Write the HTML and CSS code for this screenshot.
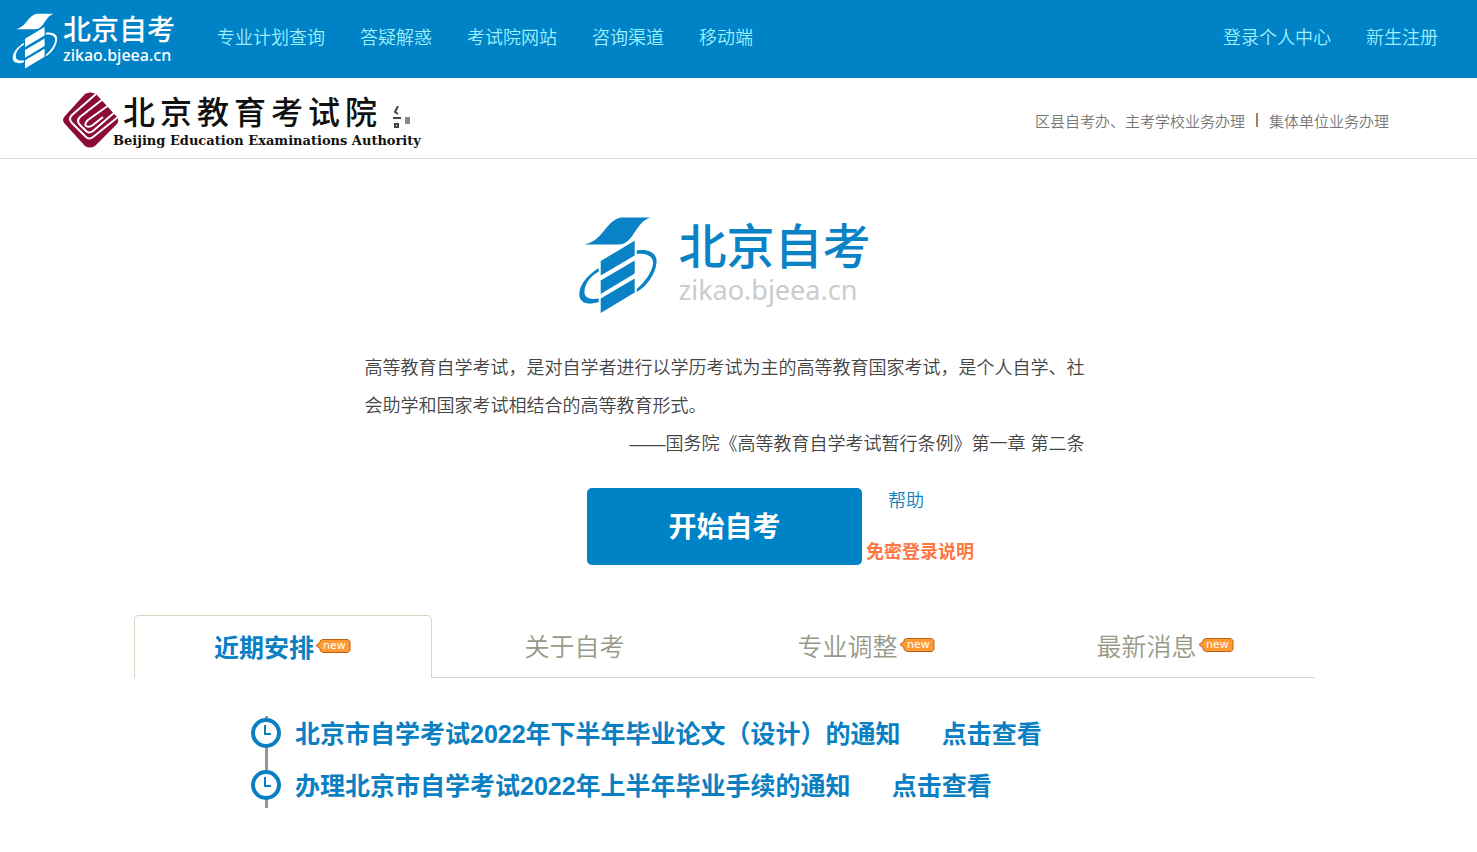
FILE: index.html
```html
<!DOCTYPE html>
<html lang="zh-CN">
  <head>
    <meta charset="UTF-8" />
    <meta name="viewport" content="width=device-width, initial-scale=1.0" />
    <title>北京自考</title>
    <link rel="stylesheet" href="styles.css" />
  </head>
  <body>
    <svg class="sprite" aria-hidden="true">
      <symbol id="logo-mark" viewBox="0 0 80 100">
        <path d="M6.5 29.5C26 25 27 6 43 2.500H72.500C57 7 56 29 41 29.500Z" />
        <path d="M22.700 46L56.700 25.700V40.500L22.700 60.500ZM22.700 65.500L56.700 45.500V58.500L22.700 79ZM22.700 83.500L56.700 63.500V77.500L22.700 98Z" />
        <path d="M58.700 35.500C72 33.500 79.500 39 78.500 48C77 60 69 71 58.700 77V74C67 67 74 57 75 49C76 42 69 37.500 58.700 39ZM20.700 53C8 61 1 71 1.300 80C2 89 11 90 20.700 87V83.500C12 85 6.500 83 6.500 77C6.500 70 11 62 20.700 56.500Z" />
      </symbol>
      <symbol id="icon-new" viewBox="0 0 36 16">
        <path d="M1 7.500L5 4.500V3L7.500 1.500H33L35 3.500V12.500L33 14.500H7.500L5 12.500V10.500Z" fill="#f93" stroke="#b8620f" />
        <text x="8" y="11" class="new-text">new</text>
      </symbol>
      <symbol id="icon-clock" viewBox="0 0 32 32">
        <circle cx="16" cy="16" r="13" fill="#fff" stroke="#0a7fc2" stroke-width="4" />
        <path d="M15 8V17H21" fill="none" stroke="#0a7fc2" stroke-width="2" />
      </symbol>
    </svg>

    <header class="topbar">
      <a href="#" class="brand">
        <svg class="brand-mark"><use href="#logo-mark" /></svg>
        <span class="brand-text">
          <span class="brand-name">北京自考</span>
          <span class="brand-url">zikao.bjeea.cn</span>
        </span>
      </a>
      <nav class="menu">
        <a href="#">专业计划查询</a>
        <a href="#">答疑解惑</a>
        <a href="#">考试院网站</a>
        <a href="#">咨询渠道</a>
        <a href="#">移动端</a>
      </nav>
      <nav class="menu account">
        <a href="#">登录个人中心</a>
        <a href="#">新生注册</a>
      </nav>
    </header>

    <div class="subbar">
      <a href="#" class="authority">
        <svg class="authority-mark" viewBox="0 0 58 56">
          <path d="M23 2Q28-1 34 2L55 25Q58 29 54 33L33 54Q28 57 23 54L3 32Q-1 28 3 24Z" fill="#8d0b38" />
          <g fill="none" stroke="#fff" stroke-width="2">
            <path d="M34 2L10 23Q6 27 10 31L24 45Q27 48 31 45L56 25" />
            <path d="M41 7L18 25Q14 29 18 33L24 39Q27 42 31 39L53 20" />
            <path d="M47 13L26 28Q22 32 24 34Q27 36 31 33L41 25" />
          </g>
        </svg>
        <span class="authority-text">
          <span class="authority-cn">
            <span>北</span><span>京</span><span>教</span><span>育</span><span>考</span><span>试</span><span>院</span>
            <svg class="seal" viewBox="0 0 18 24">
              <path d="M6 0L3 6L6 8M1 12H9M3 18H6V21H3Z" fill="none" stroke="#444" stroke-width="2" />
              <rect x="13" y="11" width="5" height="7" fill="#888" />
            </svg>
          </span>
          <span class="authority-en">Beijing Education Examinations Authority</span>
        </span>
      </a>
      <nav class="office">
        <a href="#">区县自考办、主考学校业务办理</a>
        <span class="divider">|</span>
        <a href="#">集体单位业务办理</a>
      </nav>
    </div>

    <main>
      <h1 class="hero-logo">
        <svg class="hero-mark"><use href="#logo-mark" /></svg>
        <span class="hero-text">
          <span class="hero-name">北京自考</span>
          <span class="hero-url">zikao.bjeea.cn</span>
        </span>
      </h1>

      <blockquote class="quote">
        <p>高等教育自学考试，是对自学者进行以学历考试为主的高等教育国家考试，是个人自学、社会助学和国家考试相结合的高等教育形式。</p>
        <p class="source">——国务院《高等教育自学考试暂行条例》第一章 第二条</p>
      </blockquote>

      <div class="actions">
        <button type="button" class="start">开始自考</button>
        <div class="action-links">
          <a href="#" class="help">帮助</a>
          <a href="#" class="notice">免密登录说明</a>
        </div>
      </div>

      <div class="tabs" role="tablist">
        <button type="button" role="tab" aria-selected="true" class="tab active">近期安排<svg class="new"><use href="#icon-new" /></svg></button>
        <button type="button" role="tab" aria-selected="false" class="tab">关于自考</button>
        <button type="button" role="tab" aria-selected="false" class="tab">专业调整<svg class="new"><use href="#icon-new" /></svg></button>
        <button type="button" role="tab" aria-selected="false" class="tab">最新消息<svg class="new"><use href="#icon-new" /></svg></button>
      </div>

      <ul class="timeline">
        <li>
          <svg class="clock"><use href="#icon-clock" /></svg>
          <a href="#">北京市自学考试2022年下半年毕业论文（设计）的通知</a>
          <a href="#" class="view">点击查看</a>
        </li>
        <li>
          <svg class="clock"><use href="#icon-clock" /></svg>
          <a href="#">办理北京市自学考试2022年上半年毕业手续的通知</a>
          <a href="#" class="view">点击查看</a>
        </li>
      </ul>
    </main>
  </body>
</html>
```

FILE: styles.css
```css
* {
  box-sizing: border-box;
}

body {
  margin: 0;
  background: #fff;
  color: #444;
  font-family: "Liberation Sans", "Noto Sans CJK SC", sans-serif;
  font-size: 18px;
}

a {
  color: inherit;
  text-decoration: none;
}

a:hover {
  text-decoration: underline;
}

.sprite {
  display: none;
}

/* Top bar */
.topbar {
  display: flex;
  align-items: center;
  height: 78px;
  padding: 0 39px 0 12px;
  background: #0082c6;
  color: #9ef0ff;
}

.brand {
  display: flex;
  align-items: center;
  gap: 5px;
  width: 205px;
  color: #fff;
}

.brand-mark {
  width: 46px;
  height: 58px;
  margin-top: 4px;
  fill: #fff;
}

.brand-text,
.hero-text {
  display: flex;
  flex-direction: column;
}

.brand-text {
  padding-top: 4px;
}

.brand-name {
  font-size: 28px;
  font-weight: 500;
  line-height: 28px;
}

.brand-url {
  font-family: "Noto Sans", sans-serif;
  font-size: 16px;
  font-weight: 500;
  line-height: 20px;
}

.menu {
  display: flex;
  gap: 35px;
  font-weight: 350;
  line-height: 24px;
  padding-bottom: 2px;
}

.account {
  margin-left: auto;
}

/* Authority bar */
.subbar {
  display: flex;
  align-items: center;
  justify-content: space-between;
  height: 81px;
  padding: 4px 88px 0 62px;
  border-bottom: 1px solid #ddd;
}

.authority {
  display: flex;
  align-items: center;
  color: #111;
}

.authority-mark {
  width: 58px;
  height: 56px;
}

.authority-text {
  margin-left: -7px;
}

.authority-cn {
  display: flex;
  align-items: center;
  gap: 5px;
  padding-left: 10px;
  font-size: 32px;
  font-weight: 500;
  line-height: 42px;
}

.seal {
  width: 18px;
  height: 24px;
  margin: 10px 0 0 10px;
}

.authority-en {
  display: block;
  font-family: "DejaVu Serif", serif;
  font-size: 13px;
  font-weight: bold;
  line-height: 14px;
}

.office {
  display: flex;
  gap: 10px;
  color: #777;
  font-size: 15px;
  font-weight: 350;
}

.divider {
  color: #444;
}

/* Main column */
main {
  padding-right: 28px;
}

.hero-logo {
  display: flex;
  justify-content: center;
  gap: 20px;
  margin: 0;
  padding-top: 56px;
  color: #0a82c6;
}

.hero-mark {
  width: 80px;
  height: 100px;
  fill: #0a82c6;
}

.hero-text {
  padding-top: 3px;
}

.hero-name {
  font-size: 48px;
  font-weight: 500;
  line-height: 60px;
}

.hero-url {
  color: #ccc;
  font-family: "Noto Sans", sans-serif;
  font-size: 27px;
  font-weight: 400;
  line-height: 24px;
}

.quote {
  width: 720px;
  max-width: 100%;
  margin: 34px auto 0;
  font-weight: 350;
  line-height: 38px;
}

.quote p {
  margin: 0;
}

.quote .source {
  text-align: right;
}

.actions {
  display: grid;
  grid-template-columns: 1fr auto 1fr;
  gap: 4px;
  margin-top: 25px;
}

.start {
  grid-column: 2;
  width: 275px;
  height: 77px;
  padding: 0 0 3px;
  border: 0;
  border-radius: 5px;
  background: #0082c6;
  color: #fff;
  font: bold 28px "Noto Sans CJK SC", sans-serif;
  cursor: pointer;
}

.action-links {
  display: flex;
  flex-direction: column;
  align-items: flex-start;
  justify-content: space-between;
  line-height: 26px;
}

.help {
  padding-left: 22px;
  color: #0a7fc2;
  font-weight: 350;
}

.notice {
  color: #ff7744;
  font-weight: bold;
}

/* Tabs */
.tabs {
  display: grid;
  grid-template-columns: 298fr 285fr 299fr 299fr;
  width: 1181px;
  max-width: 100%;
  margin: 50px auto 0;
}

.tab {
  display: flex;
  align-items: center;
  justify-content: center;
  height: 63px;
  padding: 0 0 3px;
  border: 0;
  border-bottom: 1px solid #d8d8d0;
  background: #fff;
  color: #998;
  font: 350 25px "Noto Sans CJK SC", sans-serif;
  cursor: pointer;
}

.tab.active {
  border: 1px solid #d8d5c0;
  border-bottom: 0;
  border-radius: 5px 5px 0 0;
  color: #0a7fc2;
  font-weight: bold;
}

.new {
  width: 38px;
  height: 16px;
}

.new-text {
  fill: #fff;
  font: 11px "DejaVu Sans", sans-serif;
}

/* Timeline */
.timeline {
  margin: 38px 0 0;
  padding: 0 0 0 250px;
  list-style: none;
  color: #0a7fc2;
  font-size: 25px;
  font-weight: bold;
  line-height: 36px;
}

.timeline li {
  display: flex;
  align-items: flex-start;
  height: 52px;
  background: linear-gradient(#998, #998) 15px 0 / 3px 100% no-repeat;
}

.timeline li:last-child {
  height: 40px;
}

.clock {
  width: 32px;
  height: 32px;
  margin-top: 1px;
  margin-right: 13px;
}

.view {
  margin-left: 41px;
}
```
